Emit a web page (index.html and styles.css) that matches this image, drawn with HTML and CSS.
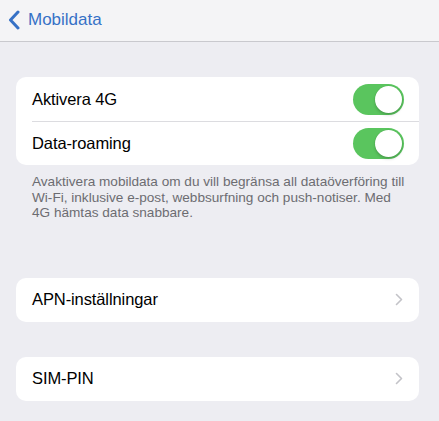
FILE: index.html
```html
<!DOCTYPE html>
<html lang="sv">
<head>
<meta charset="utf-8">
<title>Mobildata</title>
<link rel="stylesheet" href="styles.css">
</head>
<body>
<header class="nav">
  <a class="back" href="#">
    <svg class="back-icon" width="12" height="20" viewBox="0 0 12 20"><path d="M10 2 L2.5 10 L10 18" fill="none" stroke="currentColor" stroke-width="3" stroke-linecap="round" stroke-linejoin="round"/></svg>
    <span>Mobildata</span>
  </a>
</header>
<main class="content">
  <section class="group first">
    <div class="row">
      <span class="label">Aktivera 4G</span>
      <span class="switch on"><span class="knob"></span></span>
    </div>
    <div class="row">
      <span class="label">Data-roaming</span>
      <span class="switch on"><span class="knob"></span></span>
    </div>
  </section>
  <p class="footer">Avaktivera mobildata om du vill begränsa all dataöverföring till Wi-Fi, inklusive e-post, webbsurfning och push-notiser. Med 4G hämtas data snabbare.</p>
  <section class="group apn">
    <div class="row">
      <span class="label">APN-inställningar</span>
      <svg class="chev" width="8" height="13" viewBox="0 0 8 13"><path d="M1.5 1.5 L6.5 6.5 L1.5 11.5" fill="none" stroke="currentColor" stroke-width="1.6" stroke-linecap="round" stroke-linejoin="round"/></svg>
    </div>
  </section>
  <section class="group sim">
    <div class="row">
      <span class="label">SIM-PIN</span>
      <svg class="chev" width="8" height="13" viewBox="0 0 8 13"><path d="M1.5 1.5 L6.5 6.5 L1.5 11.5" fill="none" stroke="currentColor" stroke-width="1.6" stroke-linecap="round" stroke-linejoin="round"/></svg>
    </div>
  </section>
</main>
</body>
</html>
```
FILE: styles.css
```css
* { box-sizing: border-box; }
html, body {
  margin: 0;
  padding: 0;
}
body {
  background: #ededf2;
  font-family: "Liberation Sans", Arial, sans-serif;
  color: #000;
  width: 439px;
  height: 421px;
  overflow: hidden;
}
.nav {
  height: 42px;
  background: #f4f4f6;
  border-bottom: 1px solid #c9c9ce;
  display: flex;
  align-items: center;
  padding-left: 8px;
}
.back {
  display: flex;
  align-items: center;
  gap: 8px;
  color: #3671c6;
  text-decoration: none;
  font-size: 17px;
  margin-top: -1px;
}
.back-icon {
  display: block;
}
.content {
  padding: 35px 20px 0 16px;
}
.group {
  background: #fff;
  border-radius: 10px;
  overflow: hidden;
}
.row {
  height: 44px;
  display: flex;
  align-items: center;
  justify-content: space-between;
  padding: 0 15px 0 16px;
  position: relative;
}
.group.first .row + .row::before {
  content: "";
  position: absolute;
  top: 0;
  left: 16px;
  right: 0;
  height: 1px;
  background: #dcdce0;
}
.label {
  font-size: 16.5px;
  letter-spacing: -0.1px;
}
.switch {
  width: 51px;
  height: 31px;
  border-radius: 16px;
  background: #5ac55e;
  position: relative;
  flex: none;
}
.knob {
  position: absolute;
  top: 2px;
  right: 2px;
  width: 27px;
  height: 27px;
  border-radius: 50%;
  background: #fff;
  box-shadow: 0 2px 3px rgba(0,0,0,0.18), 0 0 0 0.5px rgba(0,0,0,0.06);
}
.footer {
  margin: 0;
  padding: 9px 12px 0 16px;
  font-size: 13.6px;
  line-height: 15.6px;
  color: #6c6c71;
}
.apn {
  margin-top: 57px;
}
.sim {
  margin-top: 35px;
}
.chev {
  color: #c3c3c8;
  display: block;
  margin-right: 1px;
}
```
